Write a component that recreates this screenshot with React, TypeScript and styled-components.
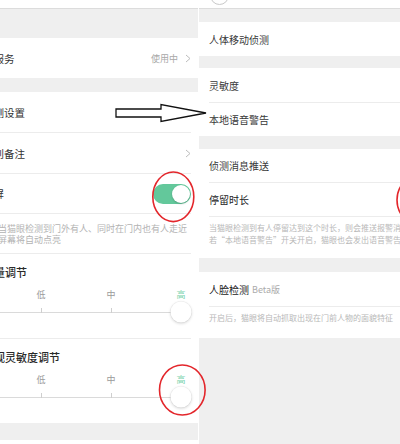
import styled, { createGlobalStyle } from 'styled-components';

const GlobalStyle = createGlobalStyle`
  html, body {
    margin: 0;
    padding: 0;
    background: #fff;
  }
  body {
    font-family: "Noto Sans CJK SC", "Noto Sans", sans-serif;
    overflow: hidden;
  }
`;

const Page = styled.div`
  position: relative;
  width: 400px;
  height: 444px;
  display: flex;
  gap: 1px;
  overflow: hidden;
  background: #fff;
`;

const Panel = styled.div<{ $width: number }>`
  width: ${p => p.$width}px;
  flex-shrink: 0;
  height: 100%;
  overflow: hidden;
  background: #efefef;
`;

const Screen = styled.div<{ $width: number; $shift: number }>`
  width: ${p => p.$width}px;
  margin-left: ${p => -p.$shift}px;
  display: flex;
  flex-direction: column;
`;

const TopBar = styled.div`
  height: 8px;
  background: #fff;
  border-bottom: 1px solid #dcdcdc;
  overflow: hidden;
  display: flex;
  align-items: flex-start;
`;

const BackIcon = styled.span`
  margin: -14px 0 0 11px;
  width: 17px;
  height: 17px;
  border-radius: 50%;
  border: 1px solid #c9c9c9;
`;

const Gap = styled.div<{ $h: number }>`
  height: ${p => p.$h}px;
  flex-shrink: 0;
`;

const Card = styled.div`
  background: #fff;
  display: flex;
  flex-direction: column;
`;

/* left screen */

const LeftRow = styled.div<{ $h: number }>`
  height: ${p => p.$h}px;
  padding: 0 12px;
  display: flex;
  align-items: center;
  gap: 7px;
  font-size: 10.5px;
  color: #333;
  white-space: nowrap;
`;

const Value = styled.span`
  margin-left: auto;
  font-size: 9px;
  color: #a8a8a8;
`;

const ChevronIcon = styled.svg<{ $auto?: boolean }>`
  flex-shrink: 0;
  margin-left: ${p => (p.$auto ? 'auto' : '0')};
`;

const LeftDivider = styled.div`
  height: 1px;
  margin: 0 12px;
  background: #ececec;
`;

const LeftDesc = styled.div`
  height: 39px;
  box-sizing: border-box;
  padding: 9px 12px 0 27px;
  font-size: 9px;
  line-height: 11px;
  color: #b3b3b3;
  white-space: nowrap;
`;

const Switch = styled.span<{ $on: boolean }>`
  margin-left: auto;
  width: 38px;
  height: 20px;
  padding: 1px;
  box-sizing: border-box;
  border-radius: 10px;
  display: flex;
  align-items: center;
  justify-content: ${p => (p.$on ? 'flex-end' : 'flex-start')};
  background: ${p => (p.$on ? '#63c89b' : '#e2e2e2')};
`;

const SwitchKnob = styled.span`
  width: 18px;
  height: 18px;
  border-radius: 50%;
  background: #fff;
  box-shadow: 0 1px 2px rgba(0, 0, 0, 0.2);
`;

const Section = styled.div`
  padding: 11px 12px 25px;
  display: flex;
  flex-direction: column;
  white-space: nowrap;
`;

const SectionTitle = styled.div`
  font-size: 11px;
  line-height: 14px;
  font-weight: 500;
  color: #2a2a2a;
`;

const SliderLabels = styled.div`
  display: grid;
  grid-template-columns: repeat(3, 70px);
  margin: 10px 0 0 23px;
`;

const SliderLabel = styled.span<{ $active: boolean }>`
  text-align: center;
  font-size: 9px;
  line-height: 12px;
  color: ${p => (p.$active ? '#7ad3ae' : '#9a9a9a')};
`;

const Track = styled.div`
  position: relative;
  margin-top: 11px;
  width: 198px;
  height: 1px;
  background: #dadada;
`;

const Tick = styled.span`
  position: absolute;
  bottom: 0;
  width: 1px;
  height: 5px;
  background: #cfcfcf;
`;

const Knob = styled.span`
  position: absolute;
  top: 0;
  width: 21px;
  height: 21px;
  border-radius: 50%;
  background: #fff;
  box-shadow: 0 1px 3px rgba(0, 0, 0, 0.18), 0 0 0 0.5px rgba(0, 0, 0, 0.05);
  transform: translate(-50%, -50%);
`;

/* right screen */

const RightRow = styled.div<{ $h: number; $strong?: boolean }>`
  height: ${p => p.$h}px;
  padding: 0 10px;
  display: flex;
  align-items: center;
  gap: 3px;
  font-size: 10px;
  color: ${p => (p.$strong ? '#222' : '#383838')};
  white-space: nowrap;
`;

const Tag = styled.span`
  font-size: 9px;
  color: #ababab;
`;

const RightDivider = styled.div`
  height: 1px;
  margin-left: 10px;
  background: #ececec;
`;

const RightDesc = styled.div<{ $h: number }>`
  height: ${p => p.$h}px;
  box-sizing: border-box;
  padding: 5px 10px 0;
  font-size: 8px;
  line-height: 12px;
  color: #b8b8b8;
  white-space: nowrap;
`;

const Overlay = styled.svg`
  position: absolute;
  left: 0;
  top: 0;
  pointer-events: none;
`;

const Chevron = ({ auto }: { auto?: boolean }) => (
  <ChevronIcon $auto={auto} width="6" height="9" viewBox="0 0 6 9">
    <polyline points="1,1 5,4.5 1,8" fill="none" stroke="#bdbdbd" strokeWidth="1" />
  </ChevronIcon>
);

const Slider = ({ title, value }: { title: string; value: number }) => {
  const labels = ['低', '中', '高'];
  return (
    <Section>
      <SectionTitle>{title}</SectionTitle>
      <SliderLabels>
        {labels.map((l, i) => (
          <SliderLabel key={l} $active={i === value}>
            {l}
          </SliderLabel>
        ))}
      </SliderLabels>
      <Track>
        {labels.map((l, i) => (
          <Tick key={l} style={{ left: 58 + i * 70 }} />
        ))}
        <Knob style={{ left: 58 + value * 70 }} />
      </Track>
    </Section>
  );
};

const App = () => {
  return (
    <>
      <GlobalStyle />
      <Page>
        <Panel $width={198}>
          <Screen $width={232} $shift={29}>
            <TopBar />
            <Gap $h={29} />
            <Card>
              <LeftRow $h={40}>
                云服务
                <Value>使用中</Value>
                <Chevron />
              </LeftRow>
            </Card>
            <Gap $h={14} />
            <Card>
              <LeftRow $h={40}>
                侦测设置
                <Chevron auto />
              </LeftRow>
              <LeftDivider />
              <LeftRow $h={40}>
                识别备注
                <Chevron auto />
              </LeftRow>
              <LeftDivider />
              <LeftRow $h={39}>
                亮屏
                <Switch $on>
                  <SwitchKnob />
                </Switch>
              </LeftRow>
              <LeftDivider />
              <LeftDesc>
                当猫眼检测到门外有人、同时在门内也有人走近
                <br />
                屏幕将自动点亮
              </LeftDesc>
              <LeftDivider />
              <Slider title="音量调节" value={2} />
              <LeftDivider />
              <Slider title="监视灵敏度调节" value={2} />
            </Card>
            <Gap $h={17} />
            <Card>
              <LeftRow $h={40} />
            </Card>
          </Screen>
        </Panel>

        <Panel $width={201}>
          <Screen $width={240} $shift={0}>
            <TopBar>
              <BackIcon />
            </TopBar>
            <Gap $h={13} />
            <Card>
              <RightRow $h={34}>人体移动侦测</RightRow>
            </Card>
            <Gap $h={12} />
            <Card>
              <RightRow $h={34}>灵敏度</RightRow>
              <RightDivider />
              <RightRow $h={33}>本地语音警告</RightRow>
            </Card>
            <Gap $h={13} />
            <Card>
              <RightRow $h={33}>侦测消息推送</RightRow>
              <RightDivider />
              <RightRow $h={33} $strong>
                停留时长
              </RightRow>
              <RightDivider />
              <RightDesc $h={41}>
                当猫眼检测到有人停留达到这个时长，则会推送报警消息，
                <br />
                若“本地语音警告”开关开启，猫眼也会发出语音警告
              </RightDesc>
            </Card>
            <Gap $h={14} />
            <Card>
              <RightRow $h={34} $strong>
                人脸检测
                <Tag>Beta版</Tag>
              </RightRow>
              <RightDivider />
              <RightDesc $h={31}>开启后，猫眼将自动抓取出现在门前人物的面貌特征</RightDesc>
            </Card>
          </Screen>
        </Panel>

        <Overlay width="400" height="444" viewBox="0 0 400 444">
          <ellipse cx="173.3" cy="196.8" rx="20.5" ry="24.8" fill="none" stroke="#e3262b" strokeWidth="1.6" />
          <ellipse cx="182.3" cy="390" rx="22.8" ry="25" fill="none" stroke="#e3262b" strokeWidth="1.6" />
          <ellipse cx="420" cy="200" rx="23" ry="25" fill="none" stroke="#e3262b" strokeWidth="1.6" />
          <polygon
            points="116,109 161,109 161,104.5 206,113 161,121.5 161,117 116,117"
            fill="#fff"
            stroke="#111"
            strokeWidth="1.3"
            strokeLinejoin="miter"
          />
        </Overlay>
      </Page>
    </>
  );
};

export default App;
